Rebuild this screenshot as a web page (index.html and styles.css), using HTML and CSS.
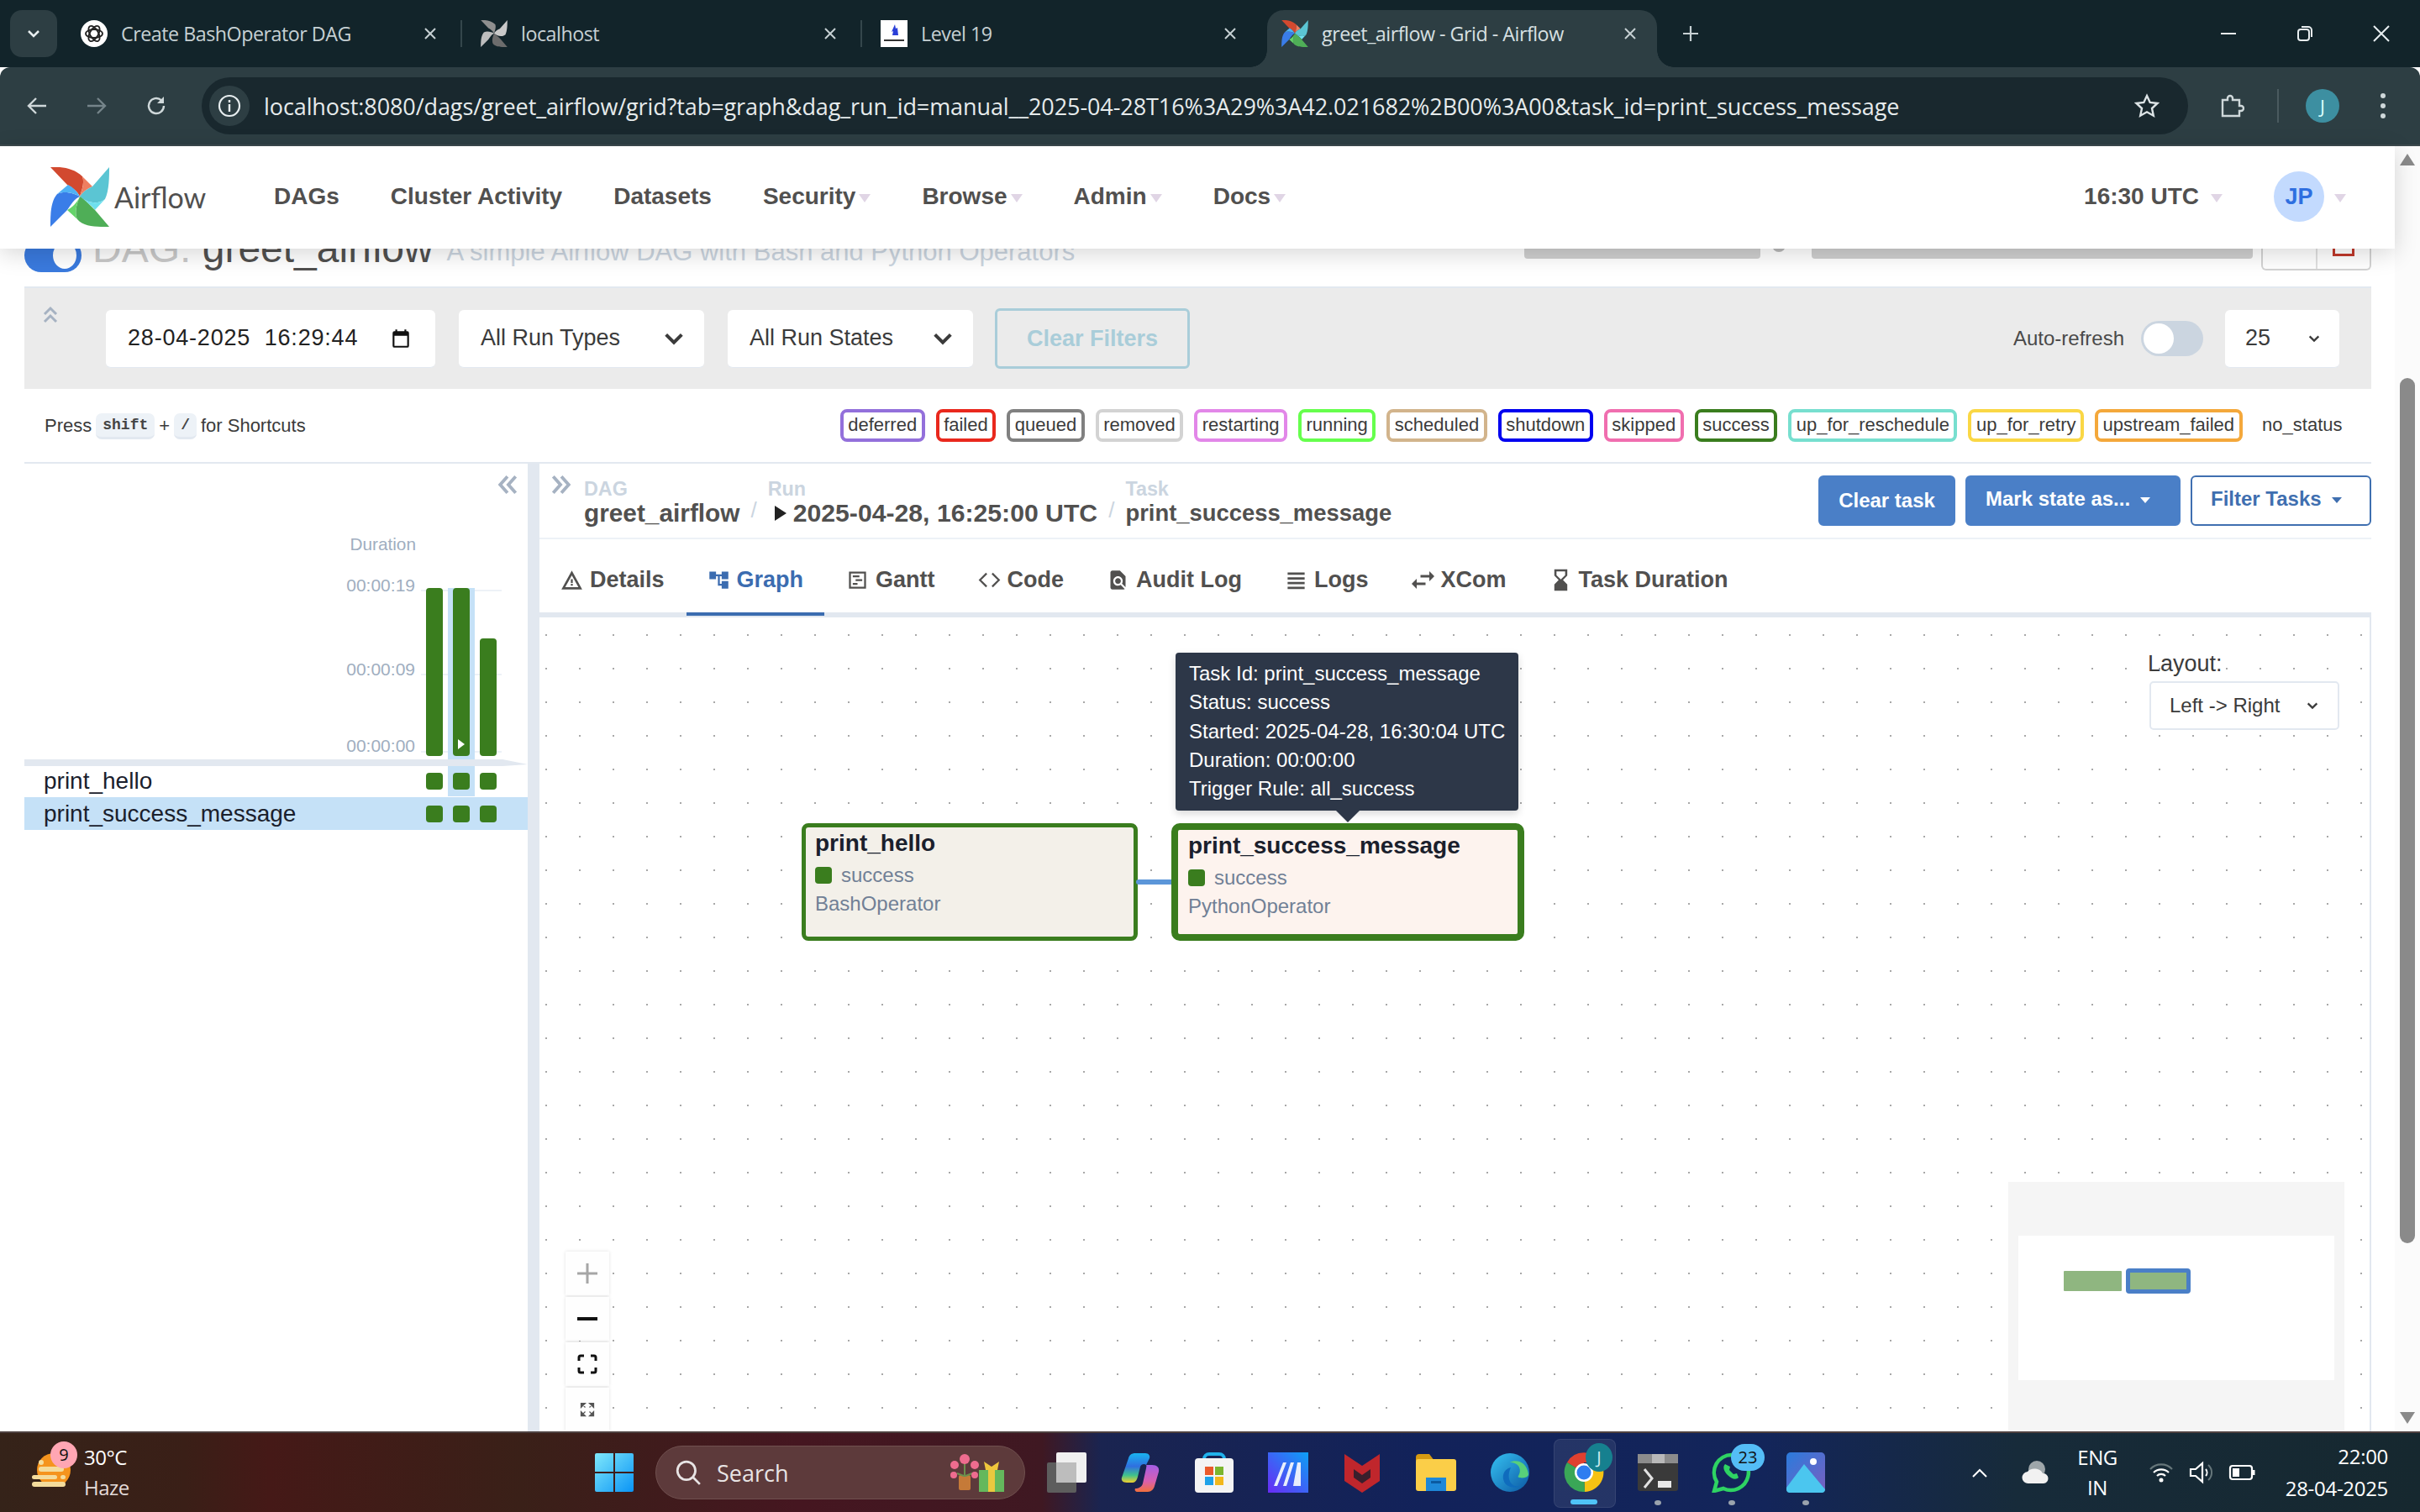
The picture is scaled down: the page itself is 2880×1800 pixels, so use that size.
FILE: index.html
```html
<!DOCTYPE html>
<html lang="en">
<head>
<meta charset="utf-8">
<title>greet_airflow - Grid - Airflow</title>
<link rel="stylesheet" href="styles.css">
</head>
<body>
<svg class="defs" width="0" height="0">
  <symbol id="pinwheel" viewBox="60 194 70 71">
    <path fill="#d2492f" d="M60 194C72 193 88 195 98 205C101 213 97 222 95 229C92 222 85 218 80 215Z"/>
    <path fill="#ef7e60" d="M98 205L110 217C103 220 98 224 95 229C97 222 101 213 98 205Z"/>
    <path fill="#5bc5d3" d="M130 194C130 205 130 222 125 232C115 240 102 235 95 229C98 224 103 220 110 217Z"/>
    <path fill="#6fe0ee" d="M95 229C102 235 115 240 125 232L113 245C108 238 100 234 95 229Z"/>
    <path fill="#4fae57" d="M95 229C100 232 108 240 113 245L130 265C118 265 100 266 92 256C88 248 92 236 95 229Z"/>
    <path fill="#65d46a" d="M95 229C92 236 88 248 92 256L80 245C86 242 92 236 95 229Z"/>
    <path fill="#3a7de8" d="M60 265C60 252 60 235 68 226C77 222 88 225 95 229C88 232 85 238 80 245Z"/>
    <path fill="#4fb2f5" d="M68 226L81 215C87 218 92 223 95 229C88 225 77 222 68 226Z"/>
  </symbol>
  <symbol id="pinwheel-grey" viewBox="60 194 70 71">
    <path fill="#8f8f8f" d="M60 194C72 193 88 195 98 205C101 213 97 222 95 229C92 222 85 218 80 215Z"/>
    <path fill="#c9c9c9" d="M130 194C130 205 130 222 125 232C115 240 102 235 95 229C98 224 103 220 110 217Z"/>
    <path fill="#6c6c6c" d="M95 229C100 232 108 240 113 245L130 265C118 265 100 266 92 256C88 248 92 236 95 229Z"/>
    <path fill="#bdbdbd" d="M60 265C60 252 60 235 68 226C77 222 88 225 95 229C88 232 85 238 80 245Z"/>
  </symbol>
  <symbol id="close" viewBox="0 0 16 16"><path d="M2 2L14 14M14 2L2 14" stroke="currentColor" stroke-width="2" fill="none"/></symbol>
  <symbol id="chev" viewBox="0 0 24 24"><path d="M4 8l8 8 8-8" stroke="currentColor" stroke-width="3.4" fill="none"/></symbol>
  <symbol id="dbl" viewBox="0 0 24 24"><path d="M11 3l-8 9 8 9M20 3l-8 9 8 9" stroke="currentColor" stroke-width="3.6" fill="none"/></symbol>
</svg>

<header class="chrome">
  <div class="tabstrip">
    <div class="tab-scroll"><svg class="ico-16"><use href="#chev"/></svg></div>
    <div class="tab">
      <svg class="favicon" viewBox="0 0 32 32"><circle cx="16" cy="16" r="16" fill="#fff"/><g fill="none" stroke="#222" stroke-width="1.8"><ellipse cx="16" cy="16" rx="10" ry="5"/><ellipse cx="16" cy="16" rx="10" ry="5" transform="rotate(60 16 16)"/><ellipse cx="16" cy="16" rx="10" ry="5" transform="rotate(120 16 16)"/></g></svg>
      <span class="tab-title">Create BashOperator DAG</span>
      <svg class="tab-close"><use href="#close"/></svg>
      <i class="tab-sep"></i>
    </div>
    <div class="tab">
      <svg class="favicon"><use href="#pinwheel-grey"/></svg>
      <span class="tab-title">localhost</span>
      <svg class="tab-close"><use href="#close"/></svg>
      <i class="tab-sep"></i>
    </div>
    <div class="tab">
      <svg class="favicon" viewBox="0 0 32 32"><rect width="32" height="32" fill="#fff"/><path d="M14 18l1-5-2 1 4-9 1 5 2-1 1 9z" fill="#2a3fd8"/><rect x="4" y="23" width="24" height="2" fill="#333"/></svg>
      <span class="tab-title">Level 19</span>
      <svg class="tab-close"><use href="#close"/></svg>
    </div>
    <div class="tab tab-active">
      <svg class="favicon"><use href="#pinwheel"/></svg>
      <span class="tab-title">greet_airflow - Grid - Airflow</span>
      <svg class="tab-close"><use href="#close"/></svg>
    </div>
    <svg class="newtab" viewBox="0 0 20 20"><path d="M10 1v18M1 10h18" stroke="currentColor" stroke-width="2.2"/></svg>
    <div class="winctl">
      <svg class="win-ico" viewBox="0 0 20 20"><path d="M1 10h18" stroke="currentColor" stroke-width="2"/></svg>
      <svg class="win-ico" viewBox="0 0 20 20"><rect x="2" y="5" width="13" height="13" rx="3" fill="none" stroke="currentColor" stroke-width="2"/><path d="M6 2h8a4 4 0 0 1 4 4v8" fill="none" stroke="currentColor" stroke-width="2"/></svg>
      <svg class="win-ico" viewBox="0 0 20 20"><path d="M1 1l18 18M19 1L1 19" stroke="currentColor" stroke-width="2"/></svg>
    </div>
  </div>
  <div class="toolbar">
    <svg class="tool-ico" viewBox="0 0 24 24"><path d="M23 12H3M11 3l-9 9 9 9" stroke="currentColor" stroke-width="2.4" fill="none"/></svg>
    <svg class="tool-ico tool-dim" viewBox="0 0 24 24"><path d="M1 12h20M13 3l9 9-9 9" stroke="currentColor" stroke-width="2.4" fill="none"/></svg>
    <svg class="tool-ico tool-reload" viewBox="0 0 24 24"><path d="M21 12a9 9 0 1 1-3-6.700" stroke="currentColor" stroke-width="2.4" fill="none"/><path d="M21 1v8h-8z" fill="currentColor"/></svg>
    <div class="omnibox">
      <span class="site-info"><svg class="info-ico" viewBox="0 0 28 28"><circle cx="14" cy="14" r="12" fill="none" stroke="currentColor" stroke-width="2.2"/><path d="M14 12v9M14 7v3" stroke="currentColor" stroke-width="2.4"/></svg></span>
      <span class="url">localhost:8080/dags/greet_airflow/grid?tab=graph&amp;dag_run_id=manual__2025-04-28T16%3A29%3A42.021682%2B00%3A00&amp;task_id=print_success_message</span>
      <svg class="star" viewBox="0 0 30 30"><path d="M15 3l3.7 8 8.8 1-6.500 6 1.800 8.700L15 22.300 7.200 26.700 9 18l-6.500-6 8.800-1z" fill="none" stroke="currentColor" stroke-width="2.4"/></svg>
    </div>
    <svg class="ext" viewBox="0 0 30 30"><path d="M4 8h6V6a3 3 0 0 1 6 0v2h8v7h2a3 3 0 0 1 0 6h-2v6H4z" fill="none" stroke="currentColor" stroke-width="2.4"/></svg>
    <i class="tool-sep"></i>
    <span class="profile">J</span>
    <span class="dots"><i></i><i></i><i></i></span>
  </div>
</header>

<div class="page">
  <div class="content">
    <nav class="navbar">
      <svg class="logo"><use href="#pinwheel"/></svg>
      <span class="logo-text">Airflow</span>
      <ul class="nav-links">
        <li>DAGs</li>
        <li>Cluster Activity</li>
        <li>Datasets</li>
        <li class="drop">Security</li>
        <li class="drop">Browse</li>
        <li class="drop">Admin</li>
        <li class="drop">Docs</li>
      </ul>
      <div class="nav-right">
        <span class="drop">16:30 UTC</span>
        <span class="avatar">JP</span>
        <i class="caret"></i>
      </div>
    </nav>

    <main class="main">
      <section class="dag-head">
        <span class="pause"><i></i></span>
        <h1 class="dag-title"><span class="dag-prefix">DAG:</span> greet_airflow</h1>
        <span class="dag-desc">A simple Airflow DAG with Bash and Python Operators</span>
        <span class="head-btn head-btn-a"></span>
        <i class="head-dot"></i>
        <span class="head-btn head-btn-b"></span>
        <span class="head-group"><b></b><b class="head-del"></b></span>
      </section>

      <section class="filters">
        <svg class="filters-collapse" viewBox="0 0 18 24"><path d="M2 11l7-7 7 7M2 20l7-7 7 7" stroke="currentColor" stroke-width="3" fill="none"/></svg>
        <div class="field field-date">
          <span class="date-text">28-04-2025&nbsp;&nbsp;16:29:44</span>
          <svg class="cal" viewBox="0 0 24 24"><path fill="#111" d="M19 4h-1V2h-2v2H8V2H6v2H5a2 2 0 0 0-2 2v14a2 2 0 0 0 2 2h14a2 2 0 0 0 2-2V6a2 2 0 0 0-2-2zm0 16H5V9h14z"/></svg>
        </div>
        <div class="field field-select"><span>All Run Types</span><svg class="sel-chev"><use href="#chev"/></svg></div>
        <div class="field field-select"><span>All Run States</span><svg class="sel-chev"><use href="#chev"/></svg></div>
        <button class="clear-filters">Clear Filters</button>
        <span class="auto-label">Auto-refresh</span>
        <span class="switch"><i></i></span>
        <div class="field field-count"><span>25</span><svg class="count-chev"><use href="#chev"/></svg></div>
      </section>

      <section class="legend">
        <div class="shortcuts">Press <kbd class="kbd">shift</kbd> + <kbd class="kbd">/</kbd> for Shortcuts</div>
        <div class="chips">
          <span class="chip c-deferred">deferred</span>
          <span class="chip c-failed">failed</span>
          <span class="chip c-queued">queued</span>
          <span class="chip c-removed">removed</span>
          <span class="chip c-restarting">restarting</span>
          <span class="chip c-running">running</span>
          <span class="chip c-scheduled">scheduled</span>
          <span class="chip c-shutdown">shutdown</span>
          <span class="chip c-skipped">skipped</span>
          <span class="chip c-success">success</span>
          <span class="chip c-reschedule">up_for_reschedule</span>
          <span class="chip c-retry">up_for_retry</span>
          <span class="chip c-upstream">upstream_failed</span>
          <span class="chip c-none">no_status</span>
        </div>
      </section>

      <section class="workspace">
        <aside class="sidebar">
          <div class="side-top">
            <svg class="side-collapse"><use href="#dbl"/></svg>
            <div class="duration-head">Duration</div>
            <div class="chart">
              <div class="axis"><span>00:00:19</span><span>00:00:09</span><span>00:00:00</span></div>
              <div class="bars">
                <i class="gridline g1"></i><i class="gridline g2"></i><i class="gridline g3"></i>
                <div class="col"><i class="bar"></i></div>
                <div class="col col-on"><i class="bar"><em class="play"></em></i></div>
                <div class="col"><i class="bar bar-mid"></i></div>
              </div>
            </div>
          </div>
          <div class="side-divider"></div>
          <div class="row">
            <span class="row-name">print_hello</span>
            <div class="cell"><i></i></div><div class="cell cell-on"><i></i></div><div class="cell"><i></i></div>
          </div>
          <div class="row row-sel">
            <span class="row-name">print_success_message</span>
            <div class="cell"><i></i></div><div class="cell"><i></i></div><div class="cell"><i></i></div>
          </div>
        </aside>

        <div class="details">
          <div class="crumbs-bar">
            <svg class="details-collapse"><use href="#dbl"/></svg>
            <div class="crumb"><small>DAG</small><strong class="crumb-dag">greet_airflow</strong></div>
            <span class="crumb-sep">/</span>
            <div class="crumb"><small>Run</small><strong class="crumb-run"><i class="run-tri"></i>2025-04-28, 16:25:00 UTC</strong></div>
            <span class="crumb-sep">/</span>
            <div class="crumb"><small>Task</small><strong class="crumb-task">print_success_message</strong></div>
            <div class="actions">
              <button class="btn btn-solid btn-clear">Clear task</button>
              <button class="btn btn-solid btn-mark">Mark state as... <i class="btn-caret"></i></button>
              <button class="btn btn-line">Filter Tasks <i class="btn-caret"></i></button>
            </div>
          </div>
          <div class="tabs">
            <a class="dtab"><svg class="dtab-ico" viewBox="0 0 24 24"><path d="M1 22h22L12 2zM5 19.500L12 7l7 12.500zM11 11h2v4h-2zm0 5h2v2h-2z"/></svg>Details</a>
            <a class="dtab dtab-on"><svg class="dtab-ico" viewBox="0 0 24 24"><path d="M22 11V3h-7v3H9V3H2v8h7V8h2v10h4v3h7v-8h-7v3h-2V8h2v3z"/></svg>Graph</a>
            <a class="dtab"><svg class="dtab-ico" viewBox="0 0 24 24"><path d="M3 3h18v18H3zm2 2v14h14V5zm2 2h7v2H7zm3 4h7v2h-7zm-3 4h5v2H7z"/></svg>Gantt</a>
            <a class="dtab"><svg class="dtab-ico" viewBox="0 0 24 24"><path d="M9 5l-7 7 7 7M15 5l7 7-7 7" fill="none" stroke="currentColor" stroke-width="2"/></svg>Code</a>
            <a class="dtab"><svg class="dtab-ico" viewBox="0 0 24 24"><path d="M20 19.590V8l-6-6H6c-1.100 0-2 .9-2 2v16c0 1.100.9 2 2 2h12c.45 0 .85-.15 1.190-.4l-4.430-4.430c-.8.52-1.740.83-2.760.83-2.760 0-5-2.240-5-5s2.240-5 5-5 5 2.240 5 5c0 1.020-.31 1.960-.83 2.750zM9 13c0 1.660 1.340 3 3 3s3-1.340 3-3-1.340-3-3-3-3 1.340-3 3z"/></svg>Audit Log</a>
            <a class="dtab"><svg class="dtab-ico" viewBox="0 0 24 24"><path d="M3 4h18v2.500H3zm0 5h18v2.500H3zm0 5h18v2.500H3zm0 5h18v2.500H3z"/></svg>Logs</a>
            <a class="dtab"><svg class="dtab-ico" viewBox="3 3 18 18"><path d="M6.990 11L3 15l3.990 4v-3H14v-2H6.990zM21 9l-3.990-4v3H10v2h7.010v3z"/></svg>XCom</a>
            <a class="dtab"><svg class="dtab-ico" viewBox="6 1.500 12 21"><path d="M18 22l-.01-6L14 12l3.990-4.010L18 2H6v6l4 4-4 3.990V22zM8 7.500V4h8v3.500l-4 4z"/></svg>Task Duration</a>
          </div>
          <div class="canvas">
            <div class="tooltip">
              <div>Task Id: print_success_message</div>
              <div>Status: success</div>
              <div>Started: 2025-04-28, 16:30:04 UTC</div>
              <div>Duration: 00:00:00</div>
              <div>Trigger Rule: all_success</div>
            </div>
            <div class="node node-hello">
              <div class="node-title">print_hello</div>
              <div class="node-state"><i></i>success</div>
              <div class="node-op">BashOperator</div>
            </div>
            <i class="edge"></i>
            <div class="node node-success">
              <div class="node-title">print_success_message</div>
              <div class="node-state"><i></i>success</div>
              <div class="node-op">PythonOperator</div>
            </div>
            <div class="layout-ctl">
              <div class="layout-label">Layout:</div>
              <div class="layout-select"><span>Left -&gt; Right</span><svg class="count-chev"><use href="#chev"/></svg></div>
            </div>
            <div class="zoomer">
              <div class="zb"><svg class="zb-ico zb-dim" viewBox="0 0 24 24"><path d="M12 0v24M0 12h24" stroke="currentColor" stroke-width="3"/></svg></div>
              <div class="zb"><svg class="zb-ico" viewBox="0 0 24 24"><path d="M0 12h24" stroke="currentColor" stroke-width="4"/></svg></div>
              <div class="zb"><svg class="zb-ico" viewBox="0 0 24 24"><path d="M2 8V4a2 2 0 0 1 2-2h4M16 2h4a2 2 0 0 1 2 2v4M22 16v4a2 2 0 0 1-2 2h-4M8 22H4a2 2 0 0 1-2-2v-4" fill="none" stroke="currentColor" stroke-width="3"/></svg></div>
              <div class="zb"><svg class="zb-ico zb-mid" viewBox="0 0 24 24"><path d="M3 3h6l-6 6zM21 3v6l-6-6zM3 21v-6l6 6zM21 21h-6l6-6zM5 5l4 4M19 5l-4 4M5 19l4-4M19 19l-4-4" fill="currentColor" stroke="currentColor" stroke-width="1.500"/></svg></div>
            </div>
            <div class="minimap">
              <div class="mini-view">
                <i class="mini-a"></i>
                <i class="mini-b"></i>
              </div>
            </div>
          </div>
        </div>
      </section>
    </main>
  </div>
  <div class="scrollbar">
    <i class="sb-up"></i>
    <i class="sb-thumb"></i>
    <i class="sb-down"></i>
  </div>
</div>

<footer class="taskbar">
  <div class="weather">
    <svg class="weather-ico" viewBox="0 0 48 46"><circle cx="26" cy="20" r="20" fill="#f5941e"/><g fill="#f4dc9c"><rect x="8" y="8" width="6" height="6" rx="3"/><rect x="8" y="16" width="30" height="6" rx="3"/><rect x="0" y="26" width="30" height="5" rx="2.500"/><rect x="34" y="26" width="6" height="5" rx="2.500"/><rect x="0" y="34" width="40" height="6" rx="3"/></g></svg>
    <span class="badge-9">9</span>
    <div class="weather-text"><div>30°C</div><div class="haze">Haze</div></div>
  </div>
  <svg class="winlogo" viewBox="0 0 46 46"><defs><linearGradient id="wg" x1="0" y1="0" x2="1" y2="1"><stop offset="0" stop-color="#7fe8fb"/><stop offset="1" stop-color="#0a94f5"/></linearGradient></defs><path fill="url(#wg)" d="M0 2a2 2 0 0 1 2-2h20v22H0zM24 0h20a2 2 0 0 1 2 2v20H24zM0 24h22v22H2a2 2 0 0 1-2-2zM24 24h22v20a2 2 0 0 1-2 2H24z"/></svg>
  <div class="search">
    <svg class="search-ico" viewBox="0 0 30 30"><circle cx="13" cy="13" r="10" fill="none" stroke="#e8e4e4" stroke-width="2.600"/><path d="M20 20l8 8" stroke="#e8e4e4" stroke-width="2.600"/></svg>
    <span class="search-text">Search</span>
    <svg class="search-art" viewBox="0 0 66 46"><rect x="12" y="26" width="14" height="18" rx="2" fill="#c57a38"/><path d="M19 28V12M10 24l8 3M28 24l-8 3" stroke="#6a8f4d" stroke-width="2"/><g fill="#ee6c8f"><circle cx="19" cy="7" r="6"/><circle cx="7" cy="14" r="5"/><circle cx="31" cy="14" r="5"/><circle cx="6" cy="26" r="4"/><circle cx="31" cy="26" r="4"/></g><rect x="36" y="20" width="30" height="26" fill="#64b85c"/><rect x="47" y="20" width="8" height="26" fill="#e9c93f"/><path d="M44 20l-2-10 9 6 9-6-2 10z" fill="#f0c63c"/></svg>
  </div>
  <div class="apps">
    <div class="app"><svg class="app-ico" viewBox="0 0 48 48"><rect x="1" y="12" width="35" height="36" rx="2" fill="#5d5d5d"/><rect x="12" y="0" width="36" height="36" rx="2" fill="#f0f0f0"/><rect x="12" y="12" width="24" height="24" fill="#bdbdbd"/></svg></div>
    <div class="app"><svg class="app-ico" viewBox="0 0 48 48"><defs><linearGradient id="cp" x1="0" y1="0" x2="0" y2="1"><stop offset="0" stop-color="#19b4f0"/><stop offset=".45" stop-color="#2f6fe0"/><stop offset=".75" stop-color="#3fc28c"/><stop offset="1" stop-color="#f3d02d"/></linearGradient><linearGradient id="cp2" x1="0" y1="0" x2="0" y2="1"><stop offset="0" stop-color="#a45ee5"/><stop offset=".6" stop-color="#d85fb0"/><stop offset="1" stop-color="#f2703c"/></linearGradient></defs><path fill="url(#cp)" d="M18 1h12c4 0 6 3 5 6l-4 8c-2-2-6-1-7 2l-3 12c-1 4-3 7-6 7H8c-5 0-7-3-6-6l8-23C11 3 14 1 18 1z"/><path fill="url(#cp2)" d="M31 15h7c6 0 9 3 8 8l-5 17c-1 4-4 7-8 7H21c-3 0-4-2-3-4 4 0 8-2 9-6l4-18c0-2 1-3 0-4z"/></svg></div>
    <div class="app"><svg class="app-ico" viewBox="0 0 48 48"><path d="M12 8a6 6 0 0 1 6-6h12a6 6 0 0 1 6 6" fill="none" stroke="#21b2ec" stroke-width="4"/><rect x="1" y="7" width="46" height="41" rx="4" fill="#f4f4f4"/><rect x="13" y="17" width="10" height="10" fill="#ea5a2b"/><rect x="25" y="17" width="10" height="10" fill="#7bb62f"/><rect x="13" y="29" width="10" height="10" fill="#1ea2e9"/><rect x="25" y="29" width="10" height="10" fill="#f2b71b"/></svg></div>
    <div class="app"><svg class="app-ico" viewBox="0 0 48 48"><defs><linearGradient id="ms" x1="1" y1="0" x2="0" y2="1"><stop offset="0" stop-color="#0ca0f5"/><stop offset="1" stop-color="#6a2af5"/></linearGradient></defs><rect width="48" height="48" fill="url(#ms)"/><path d="M7 40l11-28h4L11 40zM18 40l9-28h4l-9 28zM30 40l5-28h4v28h-3z" fill="#e8eefc"/></svg></div>
    <div class="app"><svg class="app-ico" viewBox="0 0 48 48"><path d="M3 2l21 14L45 2v32L24 48 3 34z" fill="#c0262c"/><path d="M14 20l10 7 10-7v10l-10 7-10-7z" fill="#3a1f2c"/></svg></div>
    <div class="app"><svg class="app-ico" viewBox="0 0 48 48"><path d="M0 6a4 4 0 0 1 4-4h12l6 8H0z" fill="#d69a10"/><rect y="8" width="48" height="38" rx="3" fill="#fbce48"/><rect x="12" y="30" width="24" height="16" fill="#1e88d8"/><rect x="18" y="34" width="12" height="3" fill="#0b5aa0"/></svg></div>
    <div class="app"><svg class="app-ico" viewBox="0 0 48 48"><defs><linearGradient id="ed" x1="0" y1="0" x2="1" y2="1"><stop offset="0" stop-color="#35c1f1"/><stop offset="1" stop-color="#0c59a4"/></linearGradient></defs><circle cx="24" cy="24" r="23" fill="url(#ed)"/><path d="M46 26C44 10 30 8 24 12c12 0 14 10 10 16-3 3 12 4 12-2z" fill="#58d07a"/><path d="M25 18c-9 2-12 12-6 20 4 4 12 5 18 2-12 3-18-9-12-22z" fill="#0f6cbd"/></svg></div>
    <div class="app app-active">
      <svg class="app-ico" viewBox="0 0 48 48"><path d="M24 24L4 12A23 23 0 0 1 44 12H24z" fill="#e0402f"/><path d="M24 24L44 12A23 23 0 0 1 25 47z" fill="#f6c213"/><path d="M24 24L25 47A23 23 0 0 1 4 12z" fill="#3aa757"/><circle cx="24" cy="24" r="11" fill="#fff"/><circle cx="24" cy="24" r="8.500" fill="#2f7df0"/></svg>
      <span class="badge-j">J</span>
      <i class="pill"></i>
    </div>
    <div class="app app-open"><svg class="app-ico" viewBox="0 0 48 48"><rect y="2" width="48" height="44" rx="3" fill="#3a3a3a"/><rect y="2" width="48" height="11" fill="#8c8c8c"/><rect x="17" y="2" width="15" height="11" fill="#b9b9b9"/><path d="M8 20l9 11-9 11" fill="none" stroke="#e2e2e2" stroke-width="3"/><rect x="24" y="34" width="16" height="8" fill="#e8e8e8"/></svg></div>
    <div class="app app-open"><svg class="app-ico" viewBox="0 0 48 48"><path d="M24 3a21 21 0 0 0-18 32L3 46l11-3A21 21 0 1 0 24 3z" fill="none" stroke="#2ed363" stroke-width="4.500"/><path d="M16 14c-3 3-2 8 3 13s10 6 13 3l-2-5-4 1-5-5 1-4z" fill="#2ed363"/></svg><span class="badge-wa">23</span></div>
    <div class="app app-open"><svg class="app-ico" viewBox="0 0 48 48"><defs><linearGradient id="ph" x1="0" y1="0" x2="1" y2="1"><stop offset="0" stop-color="#2a7bdc"/><stop offset="1" stop-color="#7a5fc0"/></linearGradient></defs><rect x="1" y="0" width="46" height="48" rx="5" fill="url(#ph)"/><circle cx="33" cy="11" r="4" fill="#fff"/><path d="M1 42L22 14l25 30v1a4 4 0 0 1-4 3H5a4 4 0 0 1-4-3z" fill="#4bc6ef"/></svg></div>
  </div>
  <div class="tray">
    <svg class="tray-up" viewBox="0 0 20 12"><path d="M2 11l8-8 8 8" fill="none" stroke="#fff" stroke-width="2"/></svg>
    <svg class="tray-cloud" viewBox="0 0 34 30"><circle cx="18" cy="11" r="10" fill="#9ea6aa"/><path d="M8 28a7 7 0 0 1-1-14c3-5 15-5 18 2a6 6 0 0 1 1 12z" fill="#f1f1f1"/></svg>
    <div class="lang"><div>ENG</div><div>IN</div></div>
    <svg class="tray-ico" viewBox="0 0 32 32"><path d="M3 12a18 18 0 0 1 26 0" fill="none" stroke="#66767a" stroke-width="2.200"/><path d="M7 16a13 13 0 0 1 18 0M11 20a7 7 0 0 1 10 0" fill="none" stroke="#fff" stroke-width="2.200"/><circle cx="16" cy="25" r="2.500" fill="#fff"/></svg>
    <svg class="tray-ico" viewBox="0 0 32 32"><path d="M3 12h6l8-7v22l-8-7H3z" fill="none" stroke="#fff" stroke-width="2.200"/><path d="M21 12a6 6 0 0 1 0 8" fill="none" stroke="#fff" stroke-width="2"/><path d="M24 7a12 12 0 0 1 0 18" fill="none" stroke="#66767a" stroke-width="2"/></svg>
    <svg class="tray-ico" viewBox="0 0 32 32"><rect x="2" y="8" width="26" height="16" rx="3" fill="none" stroke="#fff" stroke-width="2.200"/><rect x="5" y="11" width="8" height="10" fill="#fff"/><rect x="29" y="13" width="2.500" height="6" fill="#fff"/></svg>
    <div class="clock"><div>22:00</div><div>28-04-2025</div></div>
  </div>
</footer>
</body>
</html>
```
FILE: styles.css
```css
* { box-sizing: border-box; }
html, body { margin: 0; padding: 0; }
body { width: 2880px; height: 1800px; overflow: hidden; display: flex; flex-direction: column; font-family: "Liberation Sans", Arial, sans-serif; font-size: 27px; color: #1a202c; background: #fff; }
.defs { position: absolute; }
i, em { font-style: normal; display: block; }
svg { display: block; flex: none; }
h1, ul { margin: 0; padding: 0; }

/* browser chrome */
.chrome { flex: none; font-family: "Open Sans", "Noto Sans", sans-serif; color: #c6d0d3; }
.tabstrip { height: 80px; background: #12242a; display: flex; position: relative; }
.tab-scroll { width: 56px; height: 56px; margin: 12px 6px 0 12px; border-radius: 14px; background: #2d3e43; display: flex; align-items: center; justify-content: center; color: #e8eef0; }
.ico-16 { width: 18px; height: 18px; }
.tab { width: 476px; height: 68px; margin-top: 12px; display: flex; align-items: center; padding: 0 30px 0 22px; position: relative; }
.favicon { width: 32px; height: 32px; margin: -12px 16px 0 0; }
.tab-title { flex: 1; font-size: 23.300px; letter-spacing: -.5px; white-space: nowrap; margin-top: -12px; }
.tab-close { width: 16px; height: 16px; color: #c6d0d3; margin-top: -12px; }
.tab-sep { position: absolute; right: 0; top: 12px; width: 2px; height: 32px; background: #34464b; }
.tab-active { background: #2d3e43; width: 464px; margin: 12px 6px 0; padding: 0 24px 0 17px; border-radius: 20px 20px 0 0; color: #d7e0e2; }
.tab-active::before, .tab-active::after { content: ""; position: absolute; bottom: 0; width: 20px; height: 20px; }
.tab-active::before { left: -20px; background: radial-gradient(circle at 0 0, #12242a 19.500px, #2d3e43 20px); }
.tab-active::after { right: -20px; background: radial-gradient(circle at 100% 0, #12242a 19.500px, #2d3e43 20px); }
.newtab { width: 20px; height: 20px; margin: 30px 0 0 24px; color: #c6d0d3; }
.winctl { margin-left: auto; display: flex; gap: 71px; padding: 30px 36px 0 0; color: #e8eef0; }
.win-ico { width: 20px; height: 20px; }

.toolbar { height: 94px; background: #2d3e43; border-bottom: 2px solid #3c494d; border-radius: 12px 12px 0 0; display: flex; align-items: center; padding-left: 32px; color: #cfd8da; }
.tool-ico { width: 24px; height: 24px; margin-right: 47px; }
.tool-reload { margin-right: 42px; }
.tool-dim { color: #75848a; }
.omnibox { width: 2364px; height: 68px; border-radius: 34px; background: #19282e; display: flex; align-items: center; padding: 0 34px 0 9px; }
.site-info { width: 48px; height: 48px; border-radius: 50%; background: #2d3e43; display: flex; align-items: center; justify-content: center; color: #e8eef0; }
.info-ico { width: 28px; height: 28px; }
.url { margin-left: 17px; font-size: 27px; letter-spacing: -.09px; color: #e6ebec; white-space: nowrap; flex: 1; }
.star { width: 30px; height: 30px; color: #dde4e6; }
.ext { width: 30px; height: 30px; margin-left: 37px; color: #cfd8da; }
.tool-sep { width: 2px; height: 40px; background: #4a5a5f; margin-left: 39px; }
.profile { width: 40px; height: 40px; border-radius: 50%; background: #3d8fa1; color: #dff; font-size: 22px; display: flex; align-items: center; justify-content: center; margin-left: 32px; }
.dots { margin-left: 49px; display: flex; flex-direction: column; gap: 6px; }
.dots i { width: 6px; height: 6px; border-radius: 50%; background: #cfd8da; }

/* page */
.page { flex: 1; min-height: 0; display: flex; }
.content { width: 2850px; display: flex; flex-direction: column; min-height: 0; }
.navbar { height: 122px; flex: none; position: relative; z-index: 5; background: #fff; display: flex; align-items: center; padding: 0 0 2px 60px; box-shadow: 0 6px 26px rgba(0,0,0,.16); color: #51504f; font-weight: 700; font-size: 28px; }
.logo { width: 70px; height: 71px; }
.logo-text { font-family: Lato, sans-serif; font-weight: 400; font-size: 34px; margin-left: 6px; width: 190px; }
.nav-links { list-style: none; display: flex; gap: 61px; }
.drop { display: flex; align-items: center; }
.drop::after, .caret { content: ""; display: block; width: 0; height: 0; border-left: 7px solid transparent; border-right: 7px solid transparent; border-top: 10px solid #e0d5e5; margin-left: 4px; margin-top: 4px; }
.nav-right { margin-left: auto; display: flex; align-items: center; padding-right: 58px; }
.nav-right .drop::after { margin-left: 14px; }
.avatar { width: 60px; height: 60px; border-radius: 50%; background: #c3dafe; color: #2f6fe0; display: flex; align-items: center; justify-content: center; margin-left: 61px; font-size: 27px; }
.nav-right .caret { margin-left: 12px; }

.main { flex: 1; min-height: 0; display: flex; flex-direction: column; margin-left: 29px; margin-right: 28px; }
.dag-head { height: 45px; flex: none; overflow: hidden; display: flex; align-items: flex-end; padding-bottom: 19px; position: relative; }
.pause { width: 68px; height: 40px; border-radius: 20px; background: #3a7ade; padding: 4px 6px 4px 34px; margin-bottom: -2px; display: flex; flex: none; }
.pause i { width: 30px; height: 32px; border-radius: 50%; background: #fff; }
.dag-title { font-size: 48px; line-height: 1; font-weight: 400; color: #51504f; margin-left: 13px; white-space: nowrap; margin-bottom: 2px; }
.dag-prefix { color: #c9c9c9; }
.dag-desc { font-size: 31px; line-height: 1; color: #cbd5e0; margin-left: 16px; white-space: nowrap; width: 1286px; margin-bottom: 7px; flex: none; }
.head-btn { position: absolute; bottom: 33px; height: 30px; background: #cfcfcf; border-radius: 4px; }
.head-btn-a { left: 1785px; width: 281px; }
.head-btn-b { left: 2127px; width: 525px; }
.head-dot { position: absolute; left: 2080px; bottom: 41px; width: 16px; height: 16px; background: #b8b8b8; border-radius: 50%; }
.head-group { position: absolute; right: 0; bottom: 19px; width: 131px; height: 40px; border: 2px solid #d3d3d3; border-top: 0; border-radius: 0 0 6px 6px; display: flex; }
.head-group b { flex: 1; border-right: 2px solid #e0e0e0; position: relative; }
.head-group b:last-child { border: 0; }
.head-del::after { content: ""; position: absolute; left: 18px; top: 14px; width: 20px; height: 6px; border: 3px solid #c0392b; border-top: 0; }

.filters { height: 122px; flex: none; background: #ebebeb; border-top: 2px solid #e2e8f0; display: flex; align-items: center; padding: 0 38px 0 22px; color: #4a4a4a; }
.filters-collapse { width: 18px; height: 24px; align-self: flex-start; margin: 20px 57px 0 0; color: #a6b2c2; }
.field { background: #fff; height: 69px; border-radius: 6px; display: flex; align-items: center; color: #3b3b3b; border-bottom: 1px solid #e2e8f0; }
.field-date { width: 392px; padding: 0 28px 0 26px; justify-content: space-between; }
.date-text { letter-spacing: .8px; color: #222; white-space: nowrap; }
.cal { width: 26px; height: 28px; }
.field-select { width: 292px; margin-left: 28px; padding: 0 22px 0 26px; justify-content: space-between; }
.sel-chev { width: 28px; height: 28px; color: #3b3b3b; }
.clear-filters { width: 232px; height: 72px; margin: 0 0 0 26px; border: 3px solid #a9cdd9; border-radius: 6px; background: transparent; color: #a9cdd9; font: 700 27px "Liberation Sans", sans-serif; padding: 0; }
.auto-label { margin-left: auto; font-size: 24px; }
.switch { width: 74px; height: 42px; margin-left: 20px; border-radius: 21px; background: #cbd5e0; padding: 3px; }
.switch i { width: 36px; height: 36px; border-radius: 50%; background: #fff; }
.field-count { width: 136px; margin-left: 26px; padding: 0 22px 0 24px; justify-content: space-between; }
.count-chev { width: 16px; height: 16px; color: #3b3b3b; }

.legend { height: 89px; flex: none; border-bottom: 2px solid #e2e8f0; display: flex; align-items: center; justify-content: space-between; padding-left: 24px; font-size: 22px; color: #3b3b3b; }
.kbd { font: 700 18px "Liberation Mono", monospace; background: #edf2f7; border-bottom: 3px solid #e2e8f0; border-radius: 7px; padding: 4px 8px; color: #444; display: inline-block; line-height: 20px; margin-top: 2px; }
.shortcuts { display: flex; align-items: center; gap: 5px; }
.chips { display: flex; gap: 13px; align-items: center; padding-right: 25px; }
.chip { height: 39px; line-height: 30px; border: 4px solid; border-radius: 8px; padding: 0 5.500px; background: #fff; white-space: nowrap; }
.c-deferred { border-color: #9370db; }
.c-failed { border-color: #e9281d; }
.c-queued { border-color: #808080; }
.c-removed { border-color: #d3d3d3; }
.c-restarting { border-color: #e287e8; }
.c-running { border-color: #66ff4d; }
.c-scheduled { border-color: #d2b48c; }
.c-shutdown { border-color: #0000f0; }
.c-skipped { border-color: #f06eaf; }
.c-success { border-color: #3a7d1e; }
.c-reschedule { border-color: #77dfcf; }
.c-retry { border-color: #fad745; }
.c-upstream { border-color: #f4a83b; }
.c-none { border-color: transparent; margin-left: 1px; }

.workspace { flex: 1; min-height: 0; display: flex; }
.sidebar { width: 613px; flex: none; border-right: 14px solid #e2e8f0; display: flex; flex-direction: column; }
.side-top { height: 352px; flex: none; display: flex; flex-direction: column; }
.side-collapse { width: 26px; height: 26px; color: #a6b2c2; align-self: flex-end; margin: 12px 10px 0 0; }
.duration-head { text-align: right; font-size: 20.800px; line-height: 26px; color: #a0aec0; margin: 45px 133px 39px 0; }
.chart { display: flex; justify-content: flex-end; flex: 1; }
.axis { display: flex; flex-direction: column; font-size: 21px; line-height: 26px; color: #a0aec0; margin: -16px 7px 0 0; }
.axis span:nth-child(2) { margin-top: 74px; }
.axis span:nth-child(3) { margin-top: 65px; }
.bars { width: 96px; margin-right: 31px; height: 204px; display: flex; position: relative; }
.gridline { position: absolute; left: 0; right: 0; height: 2px; background: #edf2f7; }
.g1 { top: 2px; } .g2 { top: 102px; } .g3 { top: 194px; }
.col { width: 32px; height: 204px; padding: 0 6px 4px; display: flex; align-items: flex-end; position: relative; }
.col-on { background: #c5e1f7; }
.bar { width: 20px; height: 200px; border-radius: 4px; background: #3a7d1e; position: relative; }
.bar-mid { height: 140px; }
.play { position: absolute; left: 6px; bottom: 8px; border-left: 8px solid #fff; border-top: 6px solid transparent; border-bottom: 6px solid transparent; }
.side-divider { height: 8px; flex: none; background: #e2e8f0; clip-path: polygon(0 0, 95% 0, 100% 75%, 95% 100%, 0 100%); }
.row { height: 36px; flex: none; display: flex; align-items: center; padding: 0 31px 0 23px; font-size: 28px; color: #1a202c; }
.row-name { flex: 1; }
.cell { width: 32px; height: 100%; display: flex; align-items: center; justify-content: center; }
.cell i { width: 20px; height: 20px; border-radius: 4px; background: #3a7d1e; }
.cell-on { background: #c5e1f7; }
.row-sel { height: 39px; margin-top: 1px; background: #c5e1f7; }

.details { flex: 1; min-width: 0; display: flex; flex-direction: column; }
.crumbs-bar { height: 90px; flex: none; border-bottom: 2px solid #edf2f7; display: flex; align-items: flex-start; padding: 10px 0 0 12px; position: relative; }
.details-collapse { width: 26px; height: 26px; color: #a6b2c2; margin: 2px 15px 0 0; transform: scaleX(-1); }
.crumb { display: flex; flex-direction: column; white-space: nowrap; margin-top: 10px; }
.crumb small { font-size: 23.330px; font-weight: 700; color: #cbd5e0; line-height: 20px; }
.crumb strong { color: #51504f; line-height: 38px; display: flex; align-items: center; }
.crumb-dag { font-size: 29.800px; }
.crumb-run { font-size: 30.200px; }
.crumb-task { font-size: 27.400px; }
.crumb-sep { color: #cbd5e0; font-size: 26px; margin: 28px 13px 0 13px; line-height: 34px; font-weight: 400; }
.run-tri { border-left: 14px solid #222; border-top: 9px solid transparent; border-bottom: 9px solid transparent; margin: 0 8px 0 8px; }
.actions { margin-left: auto; display: flex; gap: 12px; margin-top: 4px; }
.btn { height: 60px; border-radius: 6px; font: 700 24px "Liberation Sans", sans-serif; padding: 0 0 4px 22px; display: flex; align-items: center; gap: 12px; border: 2px solid #4a7fc7; width: 215px; }
.btn-solid { background: #4a7fc7; color: #fff; }
.btn-clear { width: 163px; padding: 0; justify-content: center; }
.btn-mark { width: 256px; }
.btn-line { background: #fff; color: #3f6fb0; border-color: #3f6fb0; }
.btn-caret { border-left: 6px solid transparent; border-right: 6px solid transparent; border-top: 7px solid currentColor; margin-top: 2px; }
.tabs { height: 93px; flex: none; border-bottom: 6px solid #e2e8f0; display: flex; font-weight: 700; font-size: 27px; color: #51504f; }
.dtab { height: 91px; display: flex; align-items: center; gap: 8px; padding: 5px 25px 0; margin-right: 1px; }
.dtab-ico { width: 27px; height: 27px; fill: currentColor; }
.dtab-on { color: #3b6cb0; box-shadow: inset 0 -4px 0 #3b6cb0; }

.canvas { flex: 1; min-height: 0; position: relative; overflow: hidden; border-right: 2px solid #e2e8f0; background-color: #fff; background-image: radial-gradient(circle, #a8a8a8 1.200px, transparent 1.500px); background-size: 40px 40px; background-position: -12px 1px; }
.node { position: absolute; top: 245px; height: 140px; border-radius: 8px; border: 5px solid #3a7d1e; padding: 1px 11px; }
.node-hello { left: 312px; width: 400px; background: #f3f0e9; }
.node-success { left: 752px; width: 420px; background: #fdf3ee; border-width: 8px; border-radius: 10px; padding: 1px 12px; }
.node-title { font-weight: 700; font-size: 28px; line-height: 36px; color: #1a202c; }
.node-state { display: flex; align-items: center; gap: 11px; font-size: 24px; line-height: 34px; color: #718096; margin-top: 3px; }
.node-state i { width: 20px; height: 20px; border-radius: 4px; background: #3a7d1e; }
.node-op { font-size: 24px; line-height: 34px; color: #718096; }
.edge { position: absolute; left: 710px; top: 312px; width: 46px; height: 6px; border-radius: 3px; background: #5b96d9; }
.tooltip { position: absolute; left: 757px; top: 42px; width: 408px; height: 188px; background: #2d3748; border-radius: 4px; box-shadow: 0 4px 10px rgba(0,0,0,.15); color: #fff; font-size: 24px; line-height: 34.300px; padding: 8px 16px; white-space: nowrap; }
.tooltip::after { content: ""; position: absolute; left: 191px; bottom: -14px; border-left: 14px solid transparent; border-right: 14px solid transparent; border-top: 14px solid #2d3748; }
.layout-ctl { position: absolute; right: 36px; top: 40px; width: 226px; }
.layout-label { font-size: 27px; line-height: 30px; color: #3b3b3b; margin-left: -2px; }
.layout-select { height: 58px; margin-top: 6px; background: #fff; border: 2px solid #e2e8f0; border-radius: 5px; display: flex; align-items: center; justify-content: space-between; padding: 0 22px; font-size: 24px; color: #3b3b3b; }
.zoomer { position: absolute; left: 31px; bottom: 0; width: 52px; display: flex; flex-direction: column; gap: 2px; }
.zb { height: 52px; background: #fefefe; box-shadow: 0 0 4px rgba(0,0,0,.12); display: flex; align-items: center; justify-content: center; color: #111; }
.zb-ico { width: 24px; height: 24px; }
.zb-dim { color: #a6a6a6; }
.zb-mid { width: 20px; height: 20px; color: #555; }
.minimap { position: absolute; right: 30px; bottom: 0; width: 400px; height: 297px; background: #f5f5f5; padding: 64px 12px 61px; }
.mini-view { height: 172px; background: #fff; position: relative; }
.mini-a { position: absolute; left: 54px; top: 42px; width: 69px; height: 24px; background: #8fb680; border-radius: 1px; }
.mini-b { position: absolute; left: 128px; top: 39px; width: 77px; height: 30px; background: #8fb680; border: 5px solid #4a7fc7; border-radius: 4px; }

.scrollbar { width: 30px; flex: none; background: #fbfbfb; padding: 9px 6px 9px; display: flex; flex-direction: column; }
.sb-up { border-left: 9px solid transparent; border-right: 9px solid transparent; border-bottom: 14px solid #8a8a8a; }
.sb-thumb { width: 18px; height: 1030px; margin-top: 253px; border-radius: 9px; background: #8a8a8a; }
.sb-down { border-left: 9px solid transparent; border-right: 9px solid transparent; border-top: 14px solid #8a8a8a; margin-top: auto; }

/* taskbar */
.taskbar { height: 96px; flex: none; border-top: 2px solid #4e4140; background: linear-gradient(90deg, #352319 0, #3a1f17 220px, #451917 320px, #3a2018 620px, #451620 950px, #3f1822 1240px, #1a2450 1310px, #12225a 1700px, #13255a 2100px, #172b3a 2400px, #16282f 2880px); display: flex; align-items: center; font-family: "Open Sans", "Noto Sans", sans-serif; color: #fff; }
.weather { width: 708px; flex: none; display: flex; align-items: center; padding-left: 38px; position: relative; height: 100%; }
.weather-ico { width: 48px; height: 46px; }
.badge-9 { position: absolute; left: 60px; top: 10px; width: 32px; height: 32px; border-radius: 50%; background: #ffa6b3; color: #111; font-size: 20px; text-align: center; line-height: 32px; }
.weather-text { margin-left: 14px; font-size: 24px; line-height: 36px; letter-spacing: -.5px; }
.haze { color: #e4dcda; }
.winlogo { width: 46px; height: 46px; }
.search { width: 440px; height: 64px; margin-left: 26px; border-radius: 32px; background: #5d3a3b; border: 1px solid #70504f; display: flex; align-items: center; padding: 0 24px 0 22px; color: #e8e4e4; }
.search-ico { width: 32px; height: 32px; }
.search-text { flex: 1; margin-left: 18px; font-size: 27px; }
.search-art { width: 66px; height: 46px; }
.apps { display: flex; margin-left: 5px; }
.app { width: 88px; height: 92px; display: flex; align-items: center; justify-content: center; position: relative; }
.app-ico { width: 48px; height: 48px; }
.app-active::before { content: ""; position: absolute; left: 8px; right: 6px; top: 6px; bottom: 4px; border-radius: 8px; background: rgba(255,255,255,.08); border: 1px solid rgba(255,255,255,.08); }
.app-active .app-ico { position: relative; }
.pill { position: absolute; left: 28px; bottom: 8px; width: 32px; height: 6px; border-radius: 3px; background: #4fc3f7; }
.app-open::after { content: ""; position: absolute; left: 40px; bottom: 7px; width: 8px; height: 6px; border-radius: 50%; background: #9aa3ad; }
.badge-j { position: absolute; left: 46px; top: 11px; width: 32px; height: 34px; border-radius: 50%; background: #16808f; color: #cfeef2; font-size: 20px; text-align: center; line-height: 34px; }
.badge-wa { position: absolute; left: 43px; top: 12px; width: 40px; height: 32px; border-radius: 16px; background: #54bdf6; color: #111; font-size: 20px; text-align: center; line-height: 32px; }
.tray { flex: 1; display: flex; align-items: center; padding-left: 153px; }
.tray-up { width: 20px; height: 12px; }
.tray-cloud { width: 34px; height: 30px; margin-left: 40px; }
.lang { margin-left: 30px; font-size: 24px; line-height: 36px; text-align: center; width: 52px; letter-spacing: -.5px; }
.tray-ico { width: 32px; height: 32px; margin-left: 16px; }
.lang + .tray-ico { margin-left: 34px; }
.clock { margin-left: auto; padding-right: 38px; text-align: right; font-size: 24px; line-height: 38px; letter-spacing: -.3px; }
```
